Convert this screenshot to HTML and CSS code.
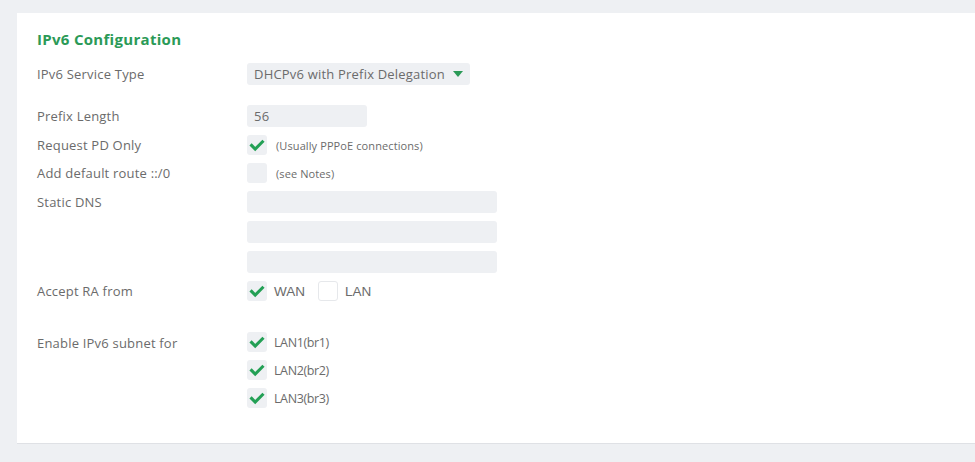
FILE: index.html
```html
<!DOCTYPE html>
<html lang="en">
<head>
    <meta charset="UTF-8">
    <title>IPv6 Configuration</title>
    <link rel="stylesheet" href="styles.css">
</head>
<body>
    <div class="panel">
        <h2>IPv6 Configuration</h2>

        <div class="row">
            <div class="label">IPv6 Service Type</div>
            <div class="field">
                <div class="select">DHCPv6 with Prefix Delegation <span class="caret"></span></div>
            </div>
        </div>

        <div class="row row-gap">
            <div class="label">Prefix Length</div>
            <div class="field"><div class="input short">56</div></div>
        </div>

        <div class="row">
            <div class="label">Request PD Only</div>
            <div class="field">
                <span class="check on"><svg viewBox="0 0 20 20"><path d="M4 10.5l4 4 8-8"/></svg></span>
                <span class="note">(Usually PPPoE connections)</span>
            </div>
        </div>

        <div class="row">
            <div class="label">Add default route ::/0</div>
            <div class="field">
                <span class="check"></span>
                <span class="note">(see Notes)</span>
            </div>
        </div>

        <div class="row top">
            <div class="label">Static DNS</div>
            <div class="field stack">
                <div class="input wide"></div>
                <div class="input wide"></div>
                <div class="input wide"></div>
            </div>
        </div>

        <div class="row">
            <div class="label">Accept RA from</div>
            <div class="field">
                <span class="check on"><svg viewBox="0 0 20 20"><path d="M4 10.5l4 4 8-8"/></svg></span>
                <span class="opt ra">WAN</span>
                <span class="check blank"></span>
                <span class="opt ra">LAN</span>
            </div>
        </div>

        <div class="row top row-gap-lg">
            <div class="label">Enable IPv6 subnet for</div>
            <div class="field list">
                <div class="item"><span class="check on"><svg viewBox="0 0 20 20"><path d="M4 10.5l4 4 8-8"/></svg></span><span class="opt">LAN1(br1)</span></div>
                <div class="item"><span class="check on"><svg viewBox="0 0 20 20"><path d="M4 10.5l4 4 8-8"/></svg></span><span class="opt">LAN2(br2)</span></div>
                <div class="item"><span class="check on"><svg viewBox="0 0 20 20"><path d="M4 10.5l4 4 8-8"/></svg></span><span class="opt">LAN3(br3)</span></div>
            </div>
        </div>
    </div>
</body>
</html>
```

FILE: styles.css
```css
body {
    margin: 0;
    padding: 13px 0 0 17px;
    background-color: #eef0f3;
    font-family: 'Open Sans', sans-serif;
    color: #6b6b6b;
    font-size: 13px;
    letter-spacing: 0.2px;
    overflow: hidden;
}
.panel {
    background-color: #fff;
    padding: 16px 20px 24px 20px;
    height: 390px;
    border-bottom: 1px solid #dfe1e5;
}
h2 {
    margin: 0 0 14px 0;
    font-size: 15px;
    font-weight: 700;
    letter-spacing: 0.3px;
    color: #2b9a57;
    line-height: 20px;
}
.row {
    display: flex;
    align-items: center;
    margin-bottom: 8px;
}
.row.top {
    align-items: flex-start;
}
.row-gap {
    margin-top: 20px;
}
.row-gap-lg {
    margin-top: 31px;
}
.label {
    width: 210px;
    line-height: 20px;
}
.row.top .label {
    padding-top: 1px;
}
.field {
    display: flex;
    align-items: center;
}
.select {
    background-color: #eef0f3;
    border-radius: 3px;
    height: 22px;
    line-height: 22px;
    padding: 0 7px;
    display: flex;
    align-items: center;
    gap: 8px;
}
.caret {
    width: 0;
    height: 0;
    border-left: 5px solid transparent;
    border-right: 5px solid transparent;
    border-top: 6px solid #2b9a57;
}
.input {
    background-color: #eef0f3;
    border-radius: 3px;
    height: 22px;
    line-height: 22px;
    padding: 0 7px;
    box-sizing: border-box;
}
.input.short {
    width: 120px;
}
.input.wide {
    width: 250px;
}
.stack {
    flex-direction: column;
    align-items: flex-start;
    gap: 8px;
}
.check {
    width: 20px;
    height: 20px;
    border-radius: 3px;
    background-color: #eef0f3;
    display: inline-flex;
    align-items: center;
    justify-content: center;
    box-sizing: border-box;
}
.check.blank {
    background-color: #fff;
    border: 1px solid #e6e8eb;
    margin-left: 13px;
}
.check svg {
    width: 18px;
    height: 18px;
}
.check path {
    fill: none;
    stroke: #23a055;
    stroke-width: 3.4;
    stroke-linecap: square;
}
.note {
    font-size: 11px;
    letter-spacing: 0.1px;
    margin-left: 9px;
}
.opt {
    font-size: 12.5px;
    letter-spacing: -0.4px;
    margin-left: 7px;
}
.opt.ra {
    font-family: 'Liberation Sans', sans-serif;
    font-size: 13.5px;
    letter-spacing: 0;
}
.list {
    flex-direction: column;
    align-items: flex-start;
    gap: 8px;
}
.item {
    display: flex;
    align-items: center;
}
```
